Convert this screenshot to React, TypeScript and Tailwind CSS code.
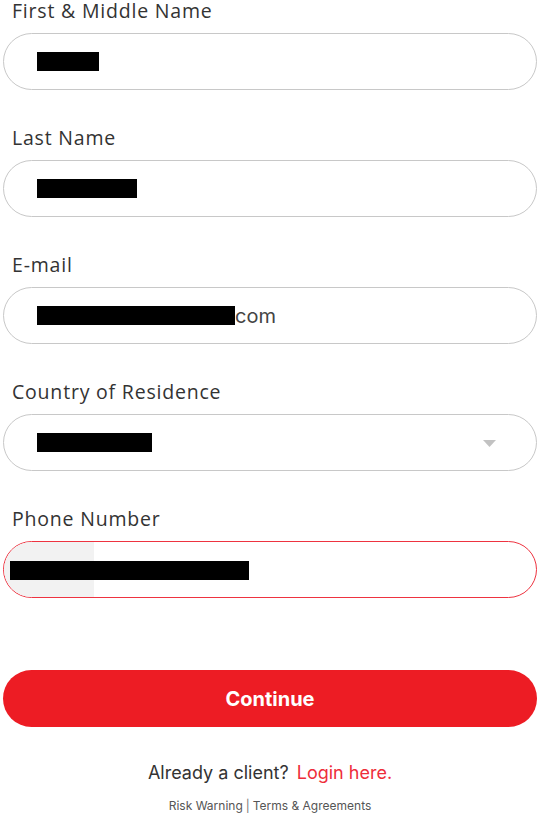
import React from 'react';

const labelFont = { fontFamily: '"Open Sans", "Liberation Sans", sans-serif' };

function Field({ label, children }: { label: string; children: React.ReactNode }) {
  return (
    <div className="flex flex-col">
      <label
        style={labelFont}
        className="pl-[9px] text-[19.5px] leading-[24px] -mt-[1px] text-[#333333] tracking-[0.8px]"
      >
        {label}
      </label>
      <div className="mt-[10px]">{children}</div>
    </div>
  );
}

function Redacted({ w }: { w: number }) {
  return <span className="inline-block h-[19px] bg-black" style={{ width: w }} />;
}

export default function App() {
  return (
    <div className="w-[540px] min-h-[827px] bg-white px-[3px] font-['Inter',sans-serif]">
      <div className="flex flex-col gap-[37px]">
        <Field label="First & Middle Name">
          <div className="h-[57px] rounded-full border border-[#c8c8c8] flex items-center pl-[33px]">
            <Redacted w={62} />
          </div>
        </Field>

        <Field label="Last Name">
          <div className="h-[57px] rounded-full border border-[#c8c8c8] flex items-center pl-[33px]">
            <Redacted w={100} />
          </div>
        </Field>

        <Field label="E-mail">
          <div className="h-[57px] rounded-full border border-[#c8c8c8] flex items-center pl-[33px] text-[20px] text-[#444444]">
            <Redacted w={198} />
            <span className="leading-none">com</span>
          </div>
        </Field>

        <Field label="Country of Residence">
          <div className="h-[57px] rounded-full border border-[#c8c8c8] flex items-center justify-between pl-[33px] pr-[40px]">
            <Redacted w={115} />
            <svg width="13" height="7" viewBox="0 0 13 7" className="mt-[1px]">
              <path d="M0 0 L13 0 L6.5 7 Z" fill="#c2c2c2" />
            </svg>
          </div>
        </Field>

        <Field label="Phone Number">
          <div className="relative h-[57px] rounded-full border border-[#ee3340] flex items-center overflow-hidden">
            <div className="h-full w-[90px] bg-[#f2f2f2]" />
            <span className="absolute left-[6px] top-[19px] h-[19px] w-[239px] bg-black" />
          </div>
        </Field>
      </div>

      <button
        type="button"
        className="mt-[72px] w-full h-[57px] rounded-full bg-[#ed1c24] text-white text-[20px] font-bold flex items-center justify-center"
      >
        Continue
      </button>

      <p className="mt-[34px] text-center text-[18px] leading-[24px] text-[#333333]">
        Already a client?{' '}
        <a className="ml-[3px] text-[#ee2d3a]">Login here.</a>
      </p>

      <p className="mt-[13px] text-center text-[12px] leading-[16px] text-[#555555]">
        <a>Risk Warning</a>
        <span className="mx-[3px] text-[#777777]">|</span>
        <a>Terms &amp; Agreements</a>
      </p>
    </div>
  );
}
